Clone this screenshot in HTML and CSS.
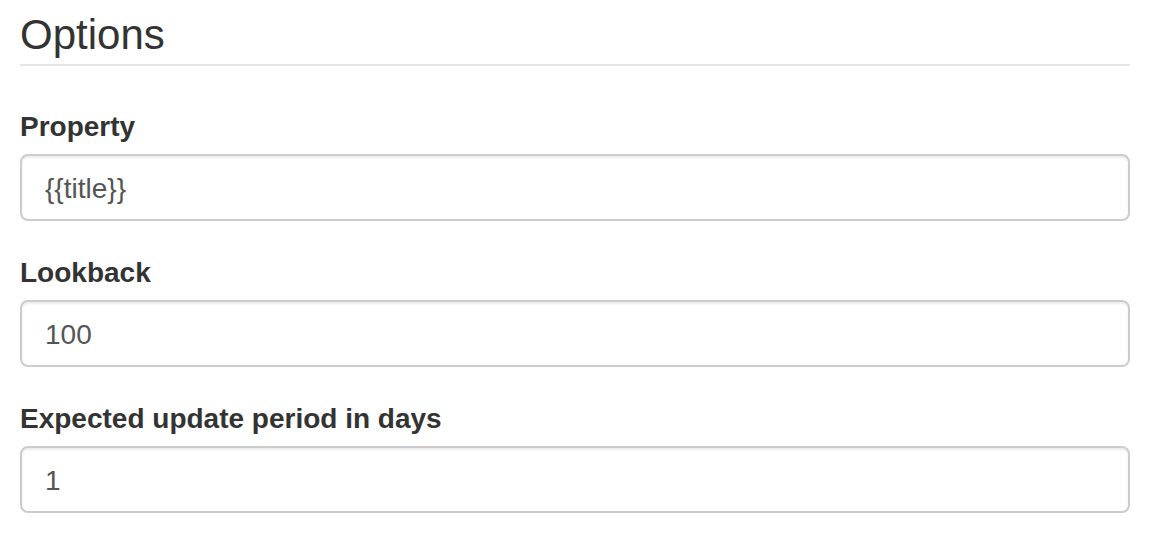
FILE: index.html
```html
<!DOCTYPE html>
<html>
<head>
<meta charset="utf-8">
<link rel="stylesheet" href="styles.css">
</head>
<body>
<form class="options">
  <fieldset class="fieldset">
    <legend class="legend">Options</legend>
    <div class="form-group">
      <label class="label" for="property">Property</label>
      <input class="control" id="property" type="text" value="{{title}}">
    </div>
    <div class="form-group">
      <label class="label" for="lookback">Lookback</label>
      <input class="control" id="lookback" type="text" value="100">
    </div>
    <div class="form-group">
      <label class="label" for="period">Expected update period in days</label>
      <input class="control" id="period" type="text" value="1">
    </div>
  </fieldset>
</form>
</body>
</html>
```
FILE: styles.css
```css
html, body {
  margin: 0;
  padding: 0;
  background: #fff;
}
body {
  font-family: "Liberation Sans", Arial, Helvetica, sans-serif;
  color: #333;
}
.options {
  padding: 2px 20px 0 20px;
}
.fieldset {
  margin: 0;
  padding: 0;
  border: 0;
  min-width: 0;
}
.legend {
  display: block;
  width: 100%;
  padding: 3px 0 0 0;
  margin: 0 0 38px 0;
  font-size: 42px;
  line-height: 59px;
  color: #333;
  border-bottom: 2px solid #e5e5e5;
}
.form-group {
  display: flex;
  flex-direction: column;
  margin-bottom: 29px;
}
.label {
  display: block;
  font-size: 28px;
  font-weight: bold;
  line-height: 40px;
  padding-top: 3px;
  margin-bottom: 7px;
  color: #333;
}
.control {
  display: block;
  box-sizing: border-box;
  width: 100%;
  height: 67px;
  margin: 0;
  padding: 2px 23px 0 23px;
  font-family: "Liberation Sans", Arial, Helvetica, sans-serif;
  font-size: 28px;
  color: #555;
  background: #fff;
  border: 2px solid #ccc;
  border-radius: 8px;
  box-shadow: inset 0 2px 2px rgba(0,0,0,0.075);
  outline: none;
}
```
